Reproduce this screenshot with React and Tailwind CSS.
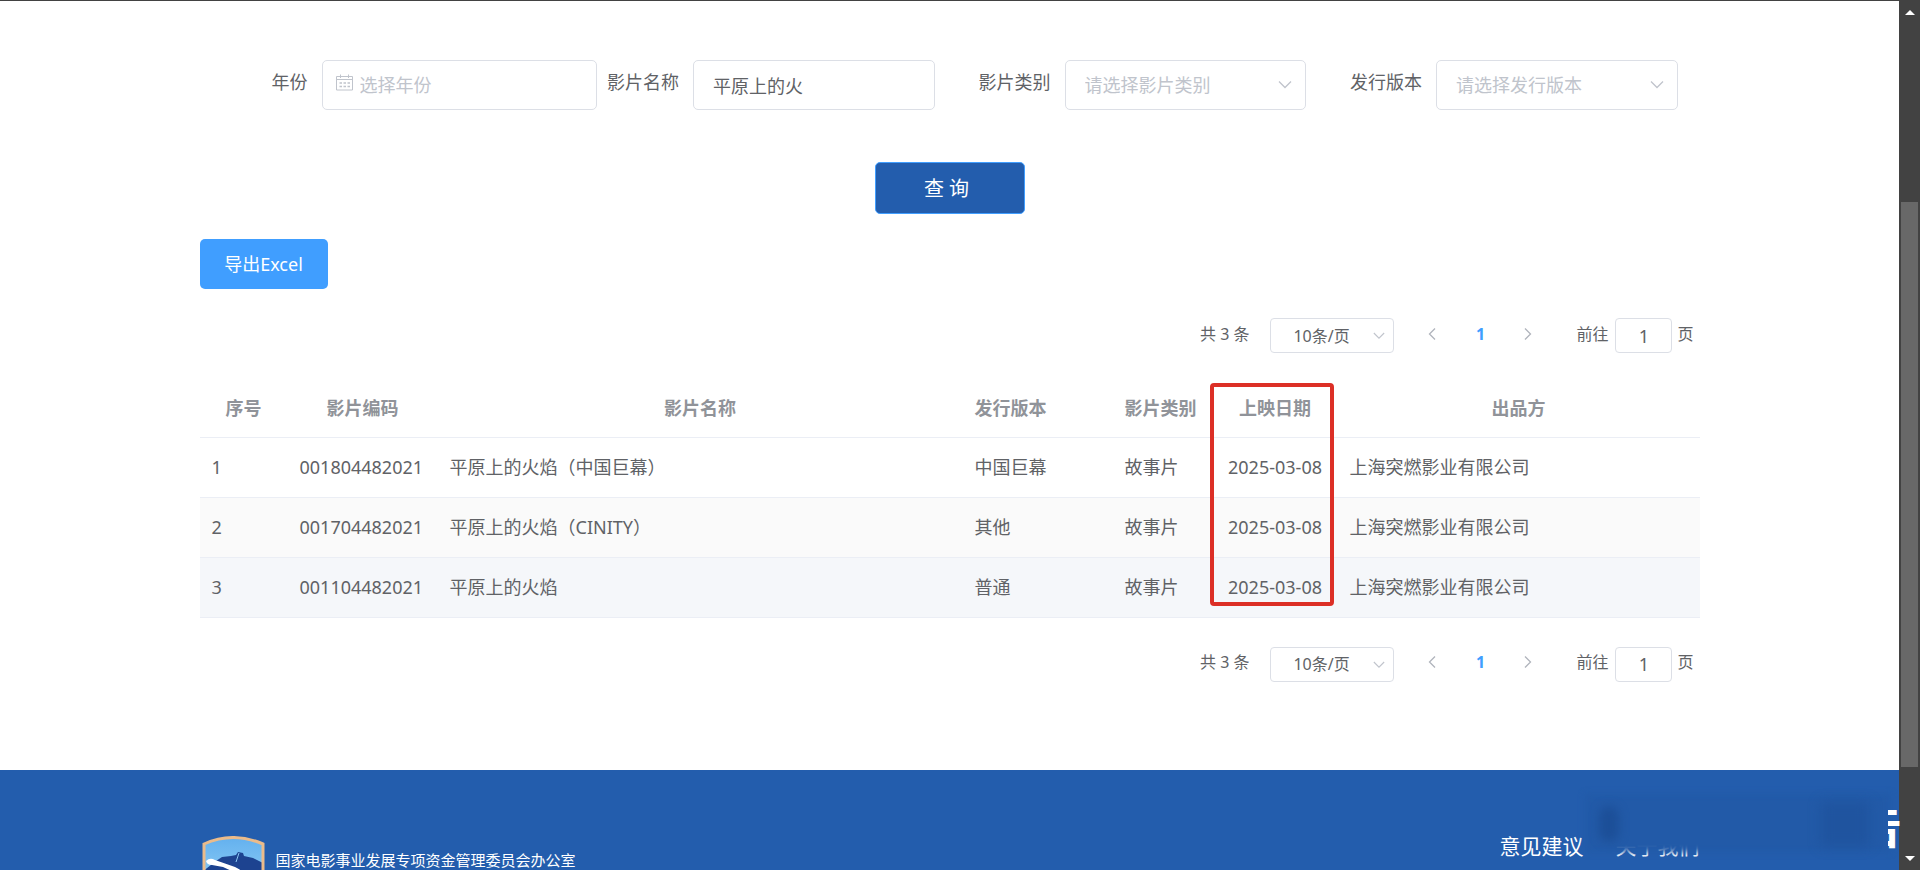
import { useState } from 'react'

const FILMS = [
  { id: 1, code: '001804482021', name: '平原上的火焰（中国巨幕）', version: '中国巨幕', type: '故事片', date: '2025-03-08', producer: '上海突燃影业有限公司' },
  { id: 2, code: '001704482021', name: '平原上的火焰（CINITY）', version: '其他', type: '故事片', date: '2025-03-08', producer: '上海突燃影业有限公司' },
  { id: 3, code: '001104482021', name: '平原上的火焰', version: '普通', type: '故事片', date: '2025-03-08', producer: '上海突燃影业有限公司' },
]

const ROW_BG = ['bg-white', 'bg-[#fafafa]', 'bg-[#f5f7fa]']

const box = 'h-[50px] w-full rounded-[5px] border border-[#dcdfe6] bg-white text-lg text-[#606266] outline-none placeholder:text-[#c0c4cc]'

function Chevron({ className, d = 'M1 3.5l6 6 6-6' }) {
  return (
    <svg viewBox="0 0 14 14" className={className} fill="none" stroke="currentColor" strokeWidth="1.3" aria-hidden="true">
      <path d={d} />
    </svg>
  )
}

function CalendarIcon() {
  return (
    <svg viewBox="0 0 17 17" className="pointer-events-none absolute top-[14px] left-[14px] size-[17px] text-[#c0c4cc]" fill="none" stroke="currentColor" aria-hidden="true">
      <path d="M.5 2.5h16v13.5h-16zM.5 5.500h16M4.500.5v3.500M12.500.5v3.500" />
      <path d="M3.500 9h2.500M7.500 9h2.500M11.500 9h2.500M3.500 12.500h2.500M7.500 12.500h2.500M11.500 12.500h2.500" strokeWidth="1.3" />
    </svg>
  )
}

function FormItem({ id, label, children }) {
  return (
    <div className="flex min-w-0">
      <label htmlFor={id} className="w-[122px] shrink-0 pt-2 pr-[14px] text-right text-lg text-[#606266]">{label}</label>
      <div className="min-w-0 flex-1 pr-2">{children}</div>
    </div>
  )
}

function SelectBox({ id, placeholder, options }) {
  const [value, setValue] = useState('')
  return (
    <div className="relative">
      <select
        id={id}
        value={value}
        onChange={(e) => setValue(e.target.value)}
        className={`${box} appearance-none pr-10 pl-[19px] ${value ? '' : 'text-[#c0c4cc]'}`}
      >
        <option value="">{placeholder}</option>
        {options.map((o) => <option key={o}>{o}</option>)}
      </select>
      <Chevron className="pointer-events-none absolute top-[18px] right-[14px] size-[14px] text-[#c0c4cc]" />
    </div>
  )
}

function Pagination({ name }) {
  const [page, setPage] = useState('1')
  return (
    <nav aria-label="分页" className="flex items-center justify-end pr-[6px] text-base text-[#606266]">
      <span className="mr-[21px] pb-1">共 3 条</span>
      <div className="relative">
        <select
          aria-label="每页条数"
          className="block h-[35px] w-[124px] appearance-none rounded-[4px] border border-[#dcdfe6] bg-white pl-[22px] text-base outline-none"
        >
          <option>10条/页</option>
          <option>20条/页</option>
          <option>50条/页</option>
        </select>
        <Chevron className="pointer-events-none absolute top-[12px] right-[9px] size-3 text-[#c0c4cc]" />
      </div>
      <button type="button" aria-label="上一页" className="ml-[14px] flex h-[35px] w-12 items-center justify-center pb-1 text-[#b0b4bc]">
        <Chevron className="size-[14px]" d="M10 1.500L4.500 7l5.500 5.500" />
      </button>
      <button type="button" className="h-[35px] w-12 pb-1 font-bold text-[#409eff]">1</button>
      <button type="button" aria-label="下一页" className="flex h-[35px] w-12 items-center justify-center pb-1 text-[#b0b4bc]">
        <Chevron className="size-[14px]" d="M4 1.500L9.500 7 4 12.500" />
      </button>
      <label htmlFor={name} className="ml-6 pb-1">前往</label>
      <input
        id={name}
        value={page}
        onChange={(e) => setPage(e.target.value)}
        className="mr-[5px] ml-[7px] h-[35px] w-[57px] rounded-[4px] border border-[#dcdfe6] text-center text-lg outline-none"
      />
      <span className="pb-1">页</span>
    </nav>
  )
}

function FilmTable() {
  return (
    <div className="relative">
      <table className="w-full table-fixed border-collapse text-left text-lg text-[#606266]">
        <colgroup>
          <col className="w-[88px]" />
          <col className="w-[150px]" />
          <col />
          <col className="w-[150px]" />
          <col className="w-[100px]" />
          <col className="w-[125px]" />
          <col className="w-[362px]" />
        </colgroup>
        <thead>
          <tr className="h-[57px] border-b border-[#ebeef5] text-[#909399]">
            <th className="px-3 text-center">序号</th>
            <th className="px-3 text-center">影片编码</th>
            <th className="px-3 text-center">影片名称</th>
            <th className="px-3">发行版本</th>
            <th className="pl-3 whitespace-nowrap">影片类别</th>
            <th className="px-3 text-center">上映日期</th>
            <th className="px-3 text-center">出品方</th>
          </tr>
        </thead>
        <tbody>
          {FILMS.map((f, i) => (
            <tr key={f.id} className={`h-[60px] border-b border-[#ebeef5] ${ROW_BG[i % 3]}`}>
              <td className="px-3">{f.id}</td>
              <td className="px-3">{f.code}</td>
              <td className="px-3">{f.name}</td>
              <td className="px-3">{f.version}</td>
              <td className="px-3">{f.type}</td>
              <td className="px-3 text-center whitespace-nowrap">{f.date}</td>
              <td className="px-3">{f.producer}</td>
            </tr>
          ))}
        </tbody>
      </table>
      {/* highlight around the release date column */}
      <div className="pointer-events-none absolute top-[3px] right-[366px] h-[223px] w-[124px] rounded-[4px] border-4 border-[#dc2f26]" />
    </div>
  )
}

function Emblem() {
  return (
    <svg viewBox="0 0 63 72" className="w-[63px] shrink-0" aria-hidden="true">
      <defs>
        <linearGradient id="sky" x1="0" y1="0" x2="0" y2="1">
          <stop offset="0" stopColor="#62b0ee" />
          <stop offset="1" stopColor="#a5dbfa" />
        </linearGradient>
        <clipPath id="shield"><path d="M2 8Q31-5 61 8V46Q58 62 31 70Q4 62 2 46Z" /></clipPath>
      </defs>
      <g clipPath="url(#shield)">
        <path d="M0 0h63v72H0z" fill="url(#sky)" />
        <path d="M0 36L14 25l6-4 9-1 5-1 2-3 5 1 1 3 9 2 12 6v44H0z" fill="#1d4390" />
        <path d="M4 25q4-4 9-1l20 7q7 3 10 8l-9-2-13-6-11-2q-5 0-6-4z" fill="#fff" />
        <path d="M37 17l-3 9" stroke="#8cc8f2" strokeWidth="1" />
      </g>
      <path d="M2 8Q31-5 61 8V46Q58 62 31 70Q4 62 2 46Z" fill="none" stroke="#eabb8b" strokeWidth="3" />
    </svg>
  )
}

function Footer() {
  return (
    <footer className="relative flex-1 bg-[#235dad] text-white">
      <div className="mx-auto flex w-full max-w-[1500px] items-start justify-between pt-[66px]">
        <div className="flex items-start gap-[11px] pl-[2px]">
          <Emblem />
          <p className="pt-[14px] text-[15px] leading-5">国家电影事业发展专项资金管理委员会办公室</p>
        </div>
        <div className="flex gap-8 text-[21px] leading-5">
          <a href="#feedback">意见建议</a>
          <a href="#about">关于我们</a>
        </div>
      </div>
      {/* smeared watermark patch */}
      <div className="pointer-events-none absolute top-6 right-2 h-[58px] w-[306px] bg-[#225aa8] blur-[3px]" />
      <div className="pointer-events-none absolute top-9 right-[280px] h-9 w-5 rounded-full bg-[#1c4f98] blur-[5px]" />
      <div className="pointer-events-none absolute top-8 right-[30px] h-11 w-12 bg-[#1f549f] blur-[6px]" />
      <div className="pointer-events-none absolute top-[30px] -right-[3px] z-10 flex h-[50px] w-[14px] justify-end overflow-hidden text-[46px] leading-[50px] font-bold">告</div>
    </footer>
  )
}

function ScrollBar() {
  return (
    <div aria-hidden="true" className="flex w-[21px] shrink-0 flex-col items-center bg-[#424242] text-white">
      <svg viewBox="0 0 10 5" className="mt-[9px] w-[10px]"><path d="M0 5L5 0l5 5z" fill="currentColor" /></svg>
      <div className="h-[187px]" />
      <div className="w-[17px] flex-1 bg-[#686868]" />
      <div className="h-[89px]" />
      <svg viewBox="0 0 10 5" className="mb-[9px] w-[10px]"><path d="M0 0l5 5 5-5z" fill="currentColor" /></svg>
    </div>
  )
}

export default function App() {
  const [title, setTitle] = useState('平原上的火')

  return (
    <div className="flex h-screen overflow-hidden border-t border-[#424242] bg-white font-['Noto_Sans','Noto_Sans_CJK_SC',sans-serif]">
      <div className="flex min-w-0 flex-1 flex-col">
        <main className="mx-auto w-full max-w-[1500px] shrink-0 pt-[59px] pb-[88px]">
          <form onSubmit={(e) => e.preventDefault()}>
            <div className="mr-[14px] grid grid-cols-4">
              <FormItem id="year" label="年份">
                <div className="relative w-[275px]">
                  <CalendarIcon />
                  <input id="year" placeholder="选择年份" className={`${box} pr-4 pl-[37px]`} />
                </div>
              </FormItem>
              <FormItem id="title" label="影片名称">
                <input id="title" value={title} onChange={(e) => setTitle(e.target.value)} className={`${box} px-[19px]`} />
              </FormItem>
              <FormItem id="type" label="影片类别">
                <SelectBox id="type" placeholder="请选择影片类别" options={['故事片', '纪录片', '动画片']} />
              </FormItem>
              <FormItem id="version" label="发行版本">
                <SelectBox id="version" placeholder="请选择发行版本" options={['普通', '中国巨幕', '其他']} />
              </FormItem>
            </div>
            <div className="mt-[52px] flex justify-center">
              <button type="submit" className="h-[52px] w-[150px] rounded-[5px] border border-[#409eff] bg-[#235dad] pt-[2px] pr-[6px] text-xl text-white">查 询</button>
            </div>
          </form>

          <button type="button" className="mt-[25px] mb-[29px] block h-[50px] w-[128px] rounded-[5px] bg-[#409eff] text-lg text-white">导出Excel</button>

          <Pagination name="page-top" />
          <div className="mt-[27px] mb-[29px]">
            <FilmTable />
          </div>
          <Pagination name="page-bottom" />
        </main>
        <Footer />
      </div>
      <ScrollBar />
    </div>
  )
}
